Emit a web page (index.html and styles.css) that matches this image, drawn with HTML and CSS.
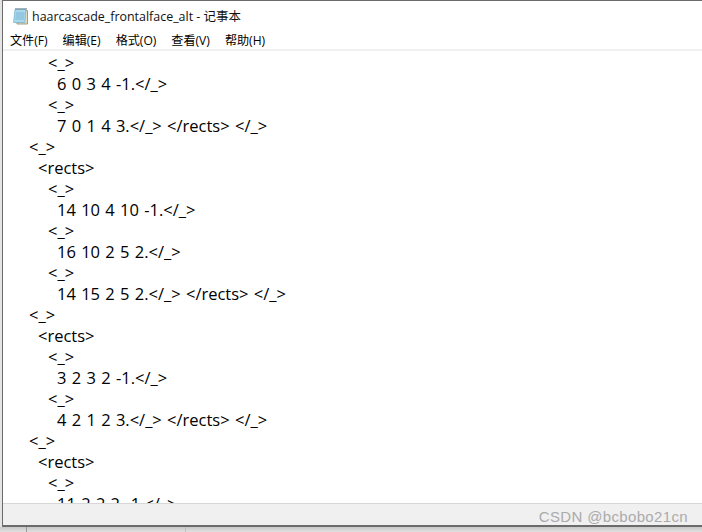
FILE: index.html
```html
<!DOCTYPE html>
<html lang="zh">
<head>
<meta charset="utf-8">
<title>haarcascade_frontalface_alt - 记事本</title>
<link rel="stylesheet" href="styles.css">
</head>
<body>
<div class="window">
  <div class="titlebar">
    <svg class="app-icon" width="17" height="18" viewBox="0 0 17 18">
      <path d="M5 3.500h10.500v13.500h-10.500z" fill="#e4dcc0" stroke="#8f876a" stroke-width=".8"/>
      <path d="M3 2.500h11l-1.200 13H1.600z" fill="#a9d9ec" stroke="#7ab4cf" stroke-width=".8"/>
      <path d="M4 6h8.500M3.800 8h8.500M3.600 10h8.500M3.400 12h8.500" stroke="#74afcf" stroke-width=".8"/>
      <path d="M4 2.500v-1.500M6 2.500v-1.500M8 2.500v-1.500M10 2.500v-1.500M12 2.500v-1.500M14 2.500v-1.500" stroke="#4a5f6b" stroke-width="1"/>
    </svg>
    <span class="title">haarcascade_frontalface_alt - 记事本</span>
  </div>
  <nav class="menubar">
    <span>文件(F)</span><span>编辑(E)</span><span>格式(O)</span><span>查看(V)</span><span>帮助(H)</span>
  </nav>
  <main class="editor">
    <div class="ln i3">&lt;_&gt;</div>
    <div class="ln i4">6 0 3 4 -1.&lt;/_&gt;</div>
    <div class="ln i3">&lt;_&gt;</div>
    <div class="ln i4">7 0 1 4 3.&lt;/_&gt; &lt;/rects&gt; &lt;/_&gt;</div>
    <div class="ln i1">&lt;_&gt;</div>
    <div class="ln i2">&lt;rects&gt;</div>
    <div class="ln i3">&lt;_&gt;</div>
    <div class="ln i4">14 10 4 10 -1.&lt;/_&gt;</div>
    <div class="ln i3">&lt;_&gt;</div>
    <div class="ln i4">16 10 2 5 2.&lt;/_&gt;</div>
    <div class="ln i3">&lt;_&gt;</div>
    <div class="ln i4">14 15 2 5 2.&lt;/_&gt; &lt;/rects&gt; &lt;/_&gt;</div>
    <div class="ln i1">&lt;_&gt;</div>
    <div class="ln i2">&lt;rects&gt;</div>
    <div class="ln i3">&lt;_&gt;</div>
    <div class="ln i4">3 2 3 2 -1.&lt;/_&gt;</div>
    <div class="ln i3">&lt;_&gt;</div>
    <div class="ln i4">4 2 1 2 3.&lt;/_&gt; &lt;/rects&gt; &lt;/_&gt;</div>
    <div class="ln i1">&lt;_&gt;</div>
    <div class="ln i2">&lt;rects&gt;</div>
    <div class="ln i3">&lt;_&gt;</div>
    <div class="ln i4">11 2 2 2 -1.&lt;/_&gt;</div>
  </main>
  <footer class="statusbar"><span class="watermark">CSDN @bcbobo21cn</span></footer>
</div>
<div class="under">
  <div class="under-a"></div>
  <div class="under-b"></div>
  <div class="under-c"></div>
</div>
</body>
</html>
```
FILE: styles.css
```css
html, body {
  margin: 0;
  padding: 0;
}
body {
  width: 702px;
  height: 532px;
  overflow: hidden;
  background: #e4e4e4;
  font-family: "Open Sans", "Noto Sans CJK SC", sans-serif;
  color: #000;
}
.window {
  box-sizing: border-box;
  margin-left: 2px;
  width: 700px;
  height: 527px;
  border-top: 1px solid #6b6b6b;
  border-left: 1px solid #6b6b6b;
  border-bottom: 2px solid #6b6b6b;
  background: #fff;
  display: flex;
  flex-direction: column;
}
.titlebar {
  height: 29px;
  flex: none;
  display: flex;
  align-items: center;
  gap: 3px;
  padding: 0 0 0 9px;
}
.app-icon {
  flex: none;
}
.title {
  font-size: 12.450px;
  color: #111;
}
.menubar {
  height: 19px;
  flex: none;
  display: flex;
  gap: 15px;
  align-items: center;
  padding-left: 7px;
  font-size: 12.100px;
  border-bottom: 2px solid #f0f0f0;
}
.editor {
  flex: 1;
  min-height: 0;
  overflow: hidden;
  padding-top: 1px;
}
.ln {
  height: 21px;
  line-height: 21px;
  font-size: 16.500px;
  word-spacing: 1px;
  white-space: pre;
}
.i1 { padding-left: 26px; }
.i2 { padding-left: 35px; }
.i3 { padding-left: 45px; }
.i4 { padding-left: 54px; }
.statusbar {
  box-sizing: border-box;
  height: 22px;
  flex: none;
  background: #f0f0f0;
  border-top: 1px solid #d7d7d7;
  position: relative;
}
.watermark {
  position: absolute;
  right: 14px;
  top: 4px;
  font-family: "Liberation Sans", sans-serif;
  font-size: 15px;
  letter-spacing: .35px;
  color: #ababab;
}
.under {
  height: 5px;
  display: flex;
  background: linear-gradient(#c8c8c8, #e0e0e0);
}
.under-a { width: 26px; border-right: 1px solid #9a9a9a; }
.under-b { width: 158px; border-right: 1px solid #c0c0c0; }
.under-c { flex: 1; }
```
